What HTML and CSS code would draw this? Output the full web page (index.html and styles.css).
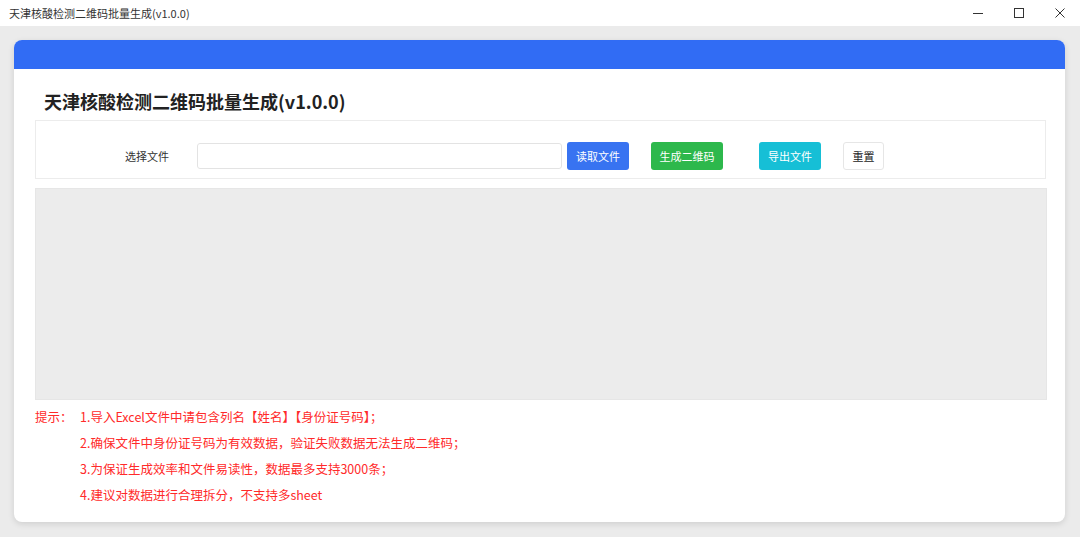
FILE: index.html
```html
<!DOCTYPE html>
<html lang="zh-CN">
<head>
<meta charset="utf-8">
<title>天津核酸检测二维码批量生成(v1.0.0)</title>
<link rel="stylesheet" href="styles.css">
</head>
<body>
<div class="titlebar">
  <span class="win-title">天津核酸检测二维码批量生成(v1.0.0)</span>
  <div class="win-controls">
    <span class="wc"><svg width="12" height="12" viewBox="0 0 12 12"><path d="M1 6.5h10" stroke="#333" stroke-width="1"/></svg></span>
    <span class="wc"><svg width="12" height="12" viewBox="0 0 12 12"><rect x="1.5" y="1.5" width="9" height="9" fill="none" stroke="#333" stroke-width="1"/></svg></span>
    <span class="wc"><svg width="12" height="12" viewBox="0 0 12 12"><path d="M1.5 1.5l9 9M10.5 1.5l-9 9" stroke="#333" stroke-width="1"/></svg></span>
  </div>
</div>
<div class="desk">
  <div class="card">
    <div class="card-head"></div>
    <div class="card-body">
      <h1 class="heading">天津核酸检测二维码批量生成(v1.0.0)</h1>
      <div class="toolbar">
        <span class="label">选择文件</span>
        <div class="input"></div>
        <button class="btn btn-blue">读取文件</button>
        <button class="btn btn-green">生成二维码</button>
        <button class="btn btn-cyan">导出文件</button>
        <button class="btn btn-plain">重置</button>
      </div>
      <div class="preview"></div>
      <div class="tips">
        <span class="tips-label">提示：</span>
        <ol class="tips-list">
          <li>1.导入Excel文件中请包含列名【姓名】【身份证号码】；</li>
          <li>2.确保文件中身份证号码为有效数据，验证失败数据无法生成二维码；</li>
          <li>3.为保证生成效率和文件易读性，数据最多支持3000条；</li>
          <li>4.建议对数据进行合理拆分，不支持多sheet</li>
        </ol>
      </div>
    </div>
  </div>
</div>
</body>
</html>
```
FILE: styles.css
```css
* { box-sizing: border-box; }
html, body { margin: 0; padding: 0; height: 100%; }
body {
  font-family: "Noto Sans CJK SC", "Noto Sans", "Liberation Sans", sans-serif;
  background: #ebebeb;
  display: flex;
  flex-direction: column;
  width: 1080px;
  height: 537px;
  overflow: hidden;
}
.titlebar {
  height: 26px;
  background: #ffffff;
  display: flex;
  align-items: center;
  justify-content: space-between;
  padding-left: 9px;
  flex: none;
}
.win-title {
  font-size: 11px;
  color: #333;
  line-height: 26px;
}
.win-controls { display: flex; height: 26px; }
.wc {
  width: 41px;
  display: flex;
  align-items: center;
  justify-content: center;
}
.wc svg { display: block; }
.desk {
  flex: 1;
  padding: 14px 15px 15px 14px;
  display: flex;
}
.card {
  flex: 1;
  background: #fff;
  border-radius: 8px;
  overflow: hidden;
  box-shadow: 0 2px 6px rgba(0,0,0,0.12);
  display: flex;
  flex-direction: column;
}
.card-head {
  height: 29px;
  background: #316cf4;
  flex: none;
}
.card-body {
  padding: 20px 18px 0 21px;
}
.heading {
  margin: 0 0 7px 9px;
  font-size: 18px;
  font-weight: 700;
  line-height: 24px;
  color: #222;
}
.toolbar {
  border: 1px solid #ececec;
  height: 59px;
  margin-right: 1px;
  padding: 21px 0 8px 0;
  display: flex;
  align-items: center;
}
.label {
  font-size: 11px;
  color: #333;
  margin-left: 89px;
  width: 43px;
  white-space: nowrap;
}
.input {
  margin-left: 29px;
  width: 365px;
  height: 26px;
  border: 1px solid #e3e3e3;
  border-radius: 3px;
  background: #fff;
}
.btn {
  font-family: inherit;
  font-size: 11px;
  height: 28px;
  border: 1px solid transparent;
  border-radius: 3px;
  color: #fff;
  padding: 0;
  line-height: 26px;
}
.btn-blue { background: #3873f1; width: 62px; margin-left: 5px; }
.btn-green { background: #2db84c; width: 72px; margin-left: 22px; }
.btn-cyan { background: #16bfd6; width: 62px; margin-left: 36px; }
.btn-plain { background: #fff; color: #222; border-color: #e6e6e6; width: 41px; margin-left: 22px; }
.preview {
  margin-top: 9px;
  height: 212px;
  background: #ececec;
  border: 1px solid #e6e6e6;
}
.tips {
  margin-top: 4px;
  display: flex;
  color: #ff2a2a;
  font-size: 12.5px;
  line-height: 26px;
}
.tips-label { width: 45px; flex: none; }
.tips-list { margin: 0; padding: 0; list-style: none; }
```
